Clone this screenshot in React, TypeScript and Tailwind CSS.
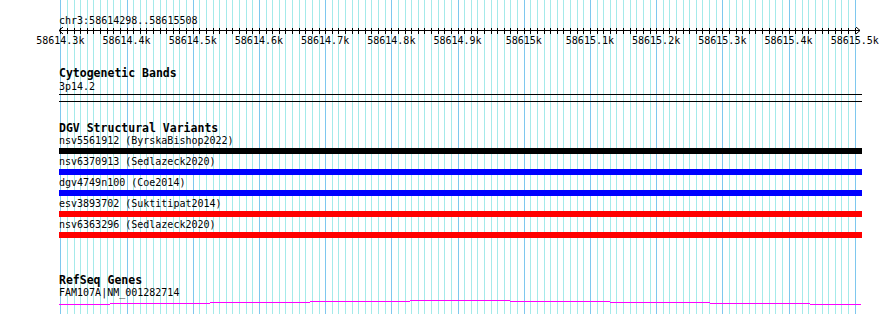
const START = 58614298;
const END = 58615508;
const LEFT = 59;
const SCALE = 0.662;

const bpX = (bp: number) => LEFT + (bp - START) * SCALE;

// every 10bp between the first and last round position
const gridBps = Array.from({ length: 121 }, (_, i) => 58614300 + i * 10);
const crisp = (bp: number) => Math.round(bpX(bp)) + 0.5;

const features = [
  { name: "nsv5561912 (ByrskaBishop2022)", color: "bg-black" },
  { name: "nsv6370913 (Sedlazeck2020)", color: "bg-[#0000ff]" },
  { name: "dgv4749n100 (Coe2014)", color: "bg-[#0000ff]" },
  { name: "esv3893702 (Suktitipat2014)", color: "bg-[#ff0000]" },
  { name: "nsv6363296 (Sedlazeck2020)", color: "bg-[#ff0000]" },
];

// gene model drawn as a slightly bowed line, in 100px steps
const geneSegments = [
  { x1: 59, x2: 110, y: 5 },
  { x1: 110, x2: 210, y: 4 },
  { x1: 210, x2: 310, y: 3 },
  { x1: 310, x2: 410, y: 2 },
  { x1: 410, x2: 510, y: 1 },
  { x1: 510, x2: 610, y: 2 },
  { x1: 610, x2: 710, y: 3 },
  { x1: 710, x2: 810, y: 4 },
  { x1: 810, x2: 861, y: 5 },
];

function Grid() {
  return (
    <svg
      className="absolute inset-0 pointer-events-none"
      width={890}
      height={314}
      shapeRendering="crispEdges"
    >
      {gridBps.map((bp) => (
        <line
          key={bp}
          x1={crisp(bp)}
          x2={crisp(bp)}
          y1={0}
          y2={314}
          stroke={bp % 100 === 0 ? "#7ec8ee" : "#a4eaea"}
          strokeWidth={1}
        />
      ))}
    </svg>
  );
}

function Ruler() {
  const endX = bpX(END);
  return (
    <div>
      <div className="pl-[59px] pt-[15px] h-[27px] text-[10px] leading-[12px] text-black">
        chr3:{START}..{END}
      </div>
      <svg width={890} height={23} className="block">
        <g shapeRendering="crispEdges" stroke="#000" strokeWidth={1}>
          <line x1={LEFT} x2={endX} y1={3.5} y2={3.5} />
          {gridBps.map((bp) => (
            <line key={bp} x1={crisp(bp)} x2={crisp(bp)} y1={1} y2={7} />
          ))}
        </g>
        <polyline points={`${LEFT + 4},0 ${LEFT},3.5 ${LEFT + 4},7`} fill="none" stroke="#000" strokeWidth={1} />
        <polyline points={`${endX - 4},0 ${endX},3.5 ${endX - 4},7`} fill="none" stroke="#000" strokeWidth={1} />
        {gridBps
          .filter((bp) => bp % 100 === 0)
          .map((bp) => (
            <text
              key={bp}
              x={bpX(bp)}
              y={16.5}
              textAnchor="middle"
              fontFamily="'DejaVu Sans Mono', monospace"
              fontSize={10}
              fill="#000"
            >
              {bp / 1000}k
            </text>
          ))}
      </svg>
    </div>
  );
}

function TrackTitle({ children }: { children: React.ReactNode }) {
  return <div className="text-[11.5px] leading-[13px] font-bold text-black">{children}</div>;
}

export default function App() {
  return (
    <div className="relative w-[890px] h-[314px] overflow-hidden bg-white font-['DejaVu_Sans_Mono',monospace] text-black">
      <Grid />

      <div className="relative">
        <Ruler />

        <div className="pl-[59px] w-[862px]">
          {/* Cytogenetic Bands */}
          <div className="mt-[17px]">
            <TrackTitle>Cytogenetic Bands</TrackTitle>
            <div className="text-[10px] leading-[12px] mt-px">3p14.2</div>
            <div className="mt-px h-px bg-black" />
            <div className="mt-[6px] h-px bg-black" />
          </div>

          {/* DGV Structural Variants */}
          <div className="mt-[20px]">
            <TrackTitle>DGV Structural Variants</TrackTitle>
            <div className="flex flex-col">
              {features.map((f) => (
                <div key={f.name} className="mb-[2px]">
                  <div className="text-[10px] leading-[12px]">{f.name}</div>
                  <div className={`mt-px h-[6px] ${f.color}`} />
                </div>
              ))}
            </div>
          </div>

          {/* RefSeq Genes */}
          <div className="mt-[34px]">
            <TrackTitle>RefSeq Genes</TrackTitle>
            <div className="text-[10px] leading-[12px]">FAM107A|NM_001282714</div>
            <svg width={803} height={8} className="block" shapeRendering="crispEdges">
              {geneSegments.map((s) => (
                <line
                  key={s.x1}
                  x1={s.x1 - LEFT}
                  x2={s.x2 - LEFT}
                  y1={s.y + 0.5}
                  y2={s.y + 0.5}
                  stroke="#ff00ff"
                  strokeWidth={1}
                />
              ))}
            </svg>
          </div>
        </div>
      </div>
    </div>
  );
}
